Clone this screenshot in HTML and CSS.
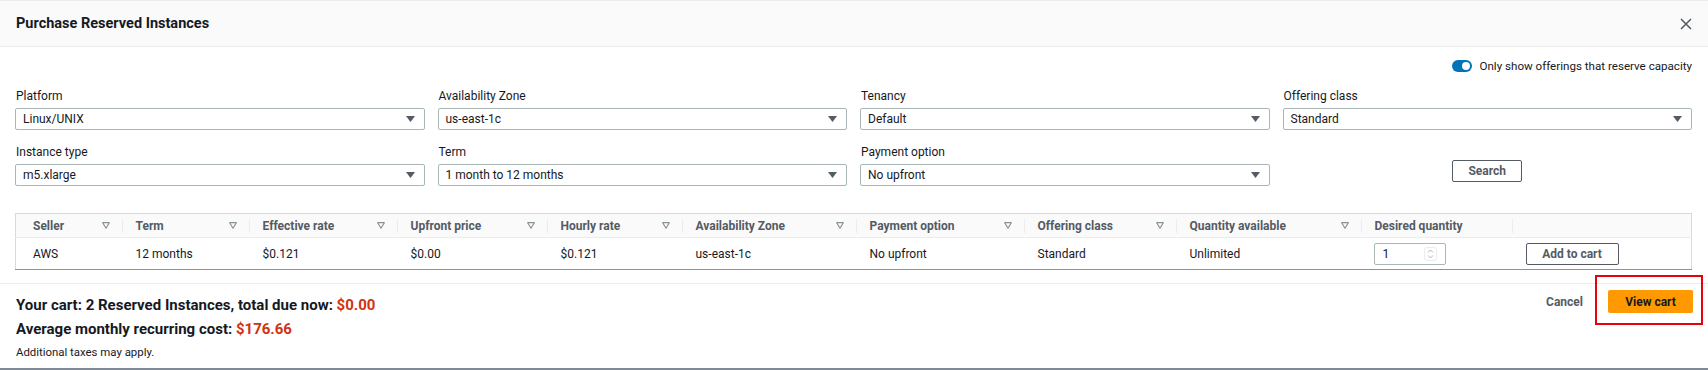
FILE: index.html
```html
<!DOCTYPE html>
<html lang="en">
<head>
<meta charset="utf-8">
<title>Purchase Reserved Instances</title>
<link rel="stylesheet" href="styles.css">
</head>
<body>
<div class="modal">
  <header class="modal-header">
    <h1 class="modal-title">Purchase Reserved Instances</h1>
    <button class="close-btn" aria-label="Close">
      <svg width="12" height="12" viewBox="0 0 12 12"><path d="M1 1L11 11M11 1L1 11" stroke="#545b64" stroke-width="1.5" fill="none"/></svg>
    </button>
  </header>

  <section class="modal-body">
    <div class="toggle-row">
      <span class="toggle"><span class="knob"></span></span>
      <span class="toggle-label">Only show offerings that reserve capacity</span>
    </div>

    <div class="filters">
      <div class="field">
        <label class="field-label">Platform</label>
        <div class="select"><span>Linux/UNIX</span><svg class="caret" width="9" height="6" viewBox="0 0 9 6"><path d="M0 0H9L4.5 6Z" fill="#545b64"/></svg></div>
      </div>
      <div class="field">
        <label class="field-label">Availability Zone</label>
        <div class="select"><span>us-east-1c</span><svg class="caret" width="9" height="6" viewBox="0 0 9 6"><path d="M0 0H9L4.5 6Z" fill="#545b64"/></svg></div>
      </div>
      <div class="field">
        <label class="field-label">Tenancy</label>
        <div class="select"><span>Default</span><svg class="caret" width="9" height="6" viewBox="0 0 9 6"><path d="M0 0H9L4.5 6Z" fill="#545b64"/></svg></div>
      </div>
      <div class="field">
        <label class="field-label">Offering class</label>
        <div class="select"><span>Standard</span><svg class="caret" width="9" height="6" viewBox="0 0 9 6"><path d="M0 0H9L4.5 6Z" fill="#545b64"/></svg></div>
      </div>
      <div class="field">
        <label class="field-label">Instance type</label>
        <div class="select"><span>m5.xlarge</span><svg class="caret" width="9" height="6" viewBox="0 0 9 6"><path d="M0 0H9L4.5 6Z" fill="#545b64"/></svg></div>
      </div>
      <div class="field">
        <label class="field-label">Term</label>
        <div class="select"><span>1 month to 12 months</span><svg class="caret" width="9" height="6" viewBox="0 0 9 6"><path d="M0 0H9L4.5 6Z" fill="#545b64"/></svg></div>
      </div>
      <div class="field">
        <label class="field-label">Payment option</label>
        <div class="select"><span>No upfront</span><svg class="caret" width="9" height="6" viewBox="0 0 9 6"><path d="M0 0H9L4.5 6Z" fill="#545b64"/></svg></div>
      </div>
      <div class="field field-action">
        <button class="btn btn-search">Search</button>
      </div>
    </div>

    <table class="offerings">
      <colgroup>
        <col class="c-seller"><col class="c-term"><col class="c-eff"><col class="c-upfront"><col class="c-hourly"><col class="c-az"><col class="c-pay"><col class="c-class"><col class="c-qty"><col class="c-desired"><col class="c-act">
      </colgroup>
      <thead>
        <tr>
          <th><div class="th-in">Seller<svg class="sort" width="8" height="7" viewBox="0 0 8 7"><path d="M0.7 0.7H7.3L4 6.2Z" fill="none" stroke="#879596" stroke-width="1.2" stroke-linejoin="round"/></svg></div></th>
          <th><div class="th-in">Term<svg class="sort" width="8" height="7" viewBox="0 0 8 7"><path d="M0.7 0.7H7.3L4 6.2Z" fill="none" stroke="#879596" stroke-width="1.2" stroke-linejoin="round"/></svg></div></th>
          <th><div class="th-in">Effective rate<svg class="sort" width="8" height="7" viewBox="0 0 8 7"><path d="M0.7 0.7H7.3L4 6.2Z" fill="none" stroke="#879596" stroke-width="1.2" stroke-linejoin="round"/></svg></div></th>
          <th><div class="th-in">Upfront price<svg class="sort" width="8" height="7" viewBox="0 0 8 7"><path d="M0.7 0.7H7.3L4 6.2Z" fill="none" stroke="#879596" stroke-width="1.2" stroke-linejoin="round"/></svg></div></th>
          <th><div class="th-in">Hourly rate<svg class="sort" width="8" height="7" viewBox="0 0 8 7"><path d="M0.7 0.7H7.3L4 6.2Z" fill="none" stroke="#879596" stroke-width="1.2" stroke-linejoin="round"/></svg></div></th>
          <th><div class="th-in">Availability Zone<svg class="sort" width="8" height="7" viewBox="0 0 8 7"><path d="M0.7 0.7H7.3L4 6.2Z" fill="none" stroke="#879596" stroke-width="1.2" stroke-linejoin="round"/></svg></div></th>
          <th><div class="th-in">Payment option<svg class="sort" width="8" height="7" viewBox="0 0 8 7"><path d="M0.7 0.7H7.3L4 6.2Z" fill="none" stroke="#879596" stroke-width="1.2" stroke-linejoin="round"/></svg></div></th>
          <th><div class="th-in">Offering class<svg class="sort" width="8" height="7" viewBox="0 0 8 7"><path d="M0.7 0.7H7.3L4 6.2Z" fill="none" stroke="#879596" stroke-width="1.2" stroke-linejoin="round"/></svg></div></th>
          <th><div class="th-in">Quantity available<svg class="sort" width="8" height="7" viewBox="0 0 8 7"><path d="M0.7 0.7H7.3L4 6.2Z" fill="none" stroke="#879596" stroke-width="1.2" stroke-linejoin="round"/></svg></div></th>
          <th><div class="th-in">Desired quantity</div></th>
          <th><div class="th-in th-last"></div></th>
        </tr>
      </thead>
      <tbody>
        <tr>
          <td>AWS</td>
          <td>12 months</td>
          <td>$0.121</td>
          <td>$0.00</td>
          <td>$0.121</td>
          <td>us-east-1c</td>
          <td>No upfront</td>
          <td>Standard</td>
          <td>Unlimited</td>
          <td>
            <div class="num-input"><span>1</span>
              <span class="spinner"><svg width="7" height="10" viewBox="0 0 7 10"><path d="M1 3.5L3.5 1L6 3.5M1 6.5L3.5 9L6 6.5" fill="none" stroke="#aab7b8" stroke-width="1"/></svg></span>
            </div>
          </td>
          <td><button class="btn btn-add">Add to cart</button></td>
        </tr>
      </tbody>
    </table>
  </section>

  <footer class="modal-footer">
    <div class="cart-summary">
      <p class="cart-line">Your cart: 2 Reserved Instances, total due now: <span class="price">$0.00</span></p>
      <p class="cart-line cart-line-2">Average monthly recurring cost: <span class="price">$176.66</span></p>
      <p class="cart-note">Additional taxes may apply.</p>
    </div>
    <div class="actions">
      <button class="link-btn">Cancel</button>
      <span class="highlight"><button class="btn-primary">View cart</button></span>
    </div>
  </footer>
</div>
</body>
</html>
```

FILE: styles.css
```css
* { box-sizing: border-box; }

html, body {
  margin: 0;
  padding: 0;
  background: #ffffff;
}

body {
  font-family: Roboto, "Liberation Sans", Arial, sans-serif;
  font-size: 12px;
  color: #16191f;
}

.modal {
  width: 1708px;
  height: 370px;
  display: flex;
  flex-direction: column;
}

/* Header */
.modal-header {
  height: 47px;
  flex: none;
  background: #fafafa;
  border-top: 1px solid #eaeded;
  border-bottom: 1px solid #eaeded;
  display: flex;
  align-items: center;
  justify-content: space-between;
  padding: 0 16px 0 16px;
}

.modal-title {
  margin: 0;
  font-size: 14.5px;
  font-weight: 700;
  color: #16191f;
}

.close-btn {
  border: 0;
  background: none;
  padding: 0;
  width: 12px;
  height: 12px;
  display: flex;
}

/* Body */
.modal-body {
  flex: none;
  padding: 13px 16px 13px 15px;
  border-bottom: 1px solid #eaeded;
}

.toggle-row {
  height: 12px;
  display: flex;
  align-items: center;
  justify-content: flex-end;
  gap: 7px;
}

.toggle {
  width: 20px;
  height: 12px;
  border-radius: 6px;
  background: #0073bb;
  display: flex;
  align-items: center;
  justify-content: flex-end;
  padding: 0 2px;
}

.knob {
  width: 8px;
  height: 8px;
  border-radius: 50%;
  background: #ffffff;
}

.toggle-label {
  font-size: 11.6px;
  line-height: 14px;
}

.filters {
  margin-top: 16px;
  display: grid;
  grid-template-columns: repeat(4, 1fr);
  column-gap: 13px;
  row-gap: 14px;
}

.field {
  display: flex;
  flex-direction: column;
  gap: 4px;
}

.field-label {
  line-height: 16px;
  font-size: 12px;
  padding-left: 1px;
}

.select {
  height: 22px;
  border: 1px solid #aab7b8;
  border-radius: 2px;
  display: flex;
  align-items: center;
  justify-content: space-between;
  padding: 0 9px 0 7px;
  font-size: 12px;
}

.field-action {
  justify-content: flex-end;
  align-items: center;
}

.btn {
  font-family: inherit;
  font-weight: 700;
  font-size: 12px;
  color: #545b64;
  background: #ffffff;
  border: 1px solid #545b64;
  border-radius: 2px;
  height: 22px;
  padding: 0;
}

.btn-search {
  width: 70px;
  margin-bottom: 4px;
}

/* Table */
.offerings {
  margin-top: 27px;
  width: 100%;
  border-collapse: collapse;
  table-layout: fixed;
  border: 1px solid #d5dbdb;
  border-bottom-color: #879596;
}

.c-seller { width: 107px; }
.c-term { width: 127px; }
.c-eff { width: 148px; }
.c-upfront { width: 150px; }
.c-hourly { width: 135px; }
.c-az { width: 174px; }
.c-pay { width: 168px; }
.c-class { width: 152px; }
.c-qty { width: 185px; }
.c-desired { width: 151px; }
.c-act { width: auto; }

.offerings thead tr {
  background: #fafafa;
  border-bottom: 1px solid #eaeded;
}

.offerings th {
  height: 24px;
  padding: 0;
  text-align: left;
  font-weight: 700;
  color: #545b64;
  font-size: 12px;
}

.th-in {
  height: 14px;
  line-height: 14px;
  display: flex;
  align-items: center;
  justify-content: space-between;
  padding: 0 12px 0 13px;
  border-right: 1px solid #eaeded;
}

.offerings th:first-child .th-in,
.offerings td:first-child {
  padding-left: 17px;
}

.th-last { border-right: 0; }

.offerings td {
  height: 32px;
  padding: 0 12px 0 13px;
  font-size: 12px;
  color: #16191f;
  vertical-align: middle;
}

.num-input {
  width: 72px;
  height: 22px;
  border: 1px solid #aab7b8;
  border-radius: 2px;
  display: flex;
  align-items: center;
  justify-content: space-between;
  padding: 0 8px 0 8px;
  margin-left: -1px;
}

.spinner {
  width: 13px;
  height: 14px;
  border: 1px solid #eaeded;
  border-radius: 3px;
  display: flex;
  align-items: center;
  justify-content: center;
}

.btn-add {
  width: 93px;
  height: 22px;
}

/* Footer */
.modal-footer {
  flex: 1;
  display: flex;
  justify-content: space-between;
  align-items: flex-start;
  padding: 6px 15px 0 16px;
  border-bottom: 2px solid #7f8a96;
}

.cart-summary {
  padding-top: 4px;
}

.cart-line {
  margin: 0;
  font-size: 15px;
  font-weight: 700;
  line-height: 23px;
  color: #16191f;
}

.cart-line-2 {
  margin-top: 1px;
}

.price {
  color: #d13212;
}

.cart-note {
  margin: 2px 0 0;
  font-size: 11.4px;
  line-height: 18px;
}

.actions {
  display: flex;
  align-items: center;
  gap: 25px;
}

.link-btn {
  border: 0;
  background: none;
  padding: 0;
  font-family: inherit;
  font-weight: 700;
  font-size: 12px;
  color: #545b64;
}

.highlight {
  position: relative;
  display: flex;
}

.highlight::after {
  content: "";
  position: absolute;
  top: -15px;
  right: -10px;
  bottom: -12px;
  left: -13px;
  border: 2px solid #e8000b;
}

.btn-primary {
  width: 85px;
  height: 23px;
  border: 0;
  border-radius: 2px;
  background: #ff9900;
  color: #16191f;
  font-family: inherit;
  font-weight: 700;
  font-size: 12px;
  padding: 0;
}
```
